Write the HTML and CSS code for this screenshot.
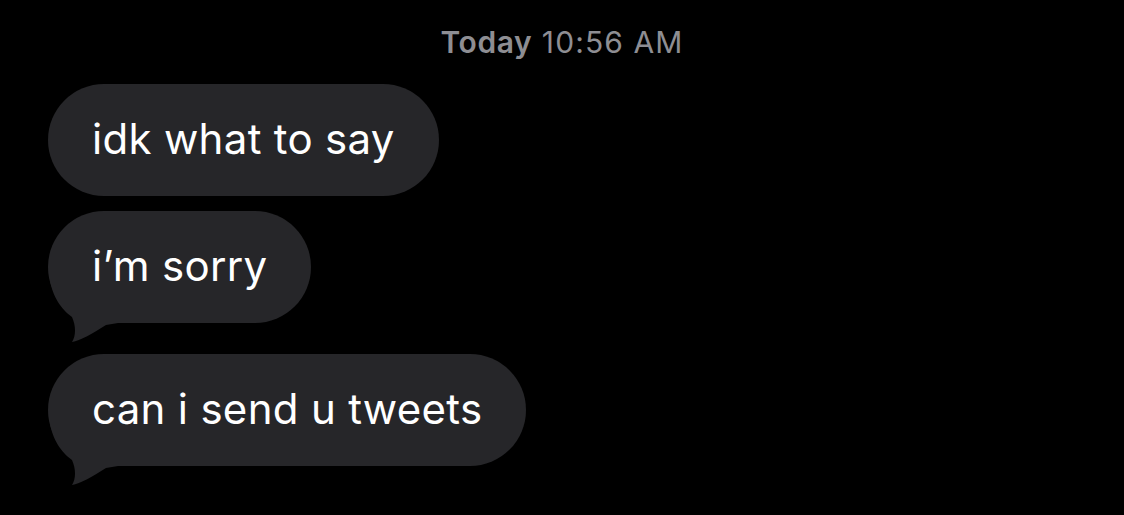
FILE: index.html
```html
<!DOCTYPE html>
<html>
<head>
<meta charset="utf-8">
<link rel="stylesheet" href="styles.css">
</head>
<body>
<main class="thread">
  <div class="stamp"><span class="day">Today</span> 10:56 AM</div>
  <div class="msgs">
    <div class="bubble">idk what to say</div>
    <div class="bubble tailed">i’m sorry<svg class="tail" width="70" height="62" viewBox="0 0 70 62"><path d="M2 0 C6 20 16 30 24 36 C28 45 28 55 24 61 C32 60 45 52 58 44 L70 42 L70 0 Z"/></svg></div>
    <div class="bubble tailed">can i send u tweets<svg class="tail" width="70" height="62" viewBox="0 0 70 62"><path d="M2 0 C6 20 16 30 24 36 C28 45 28 55 24 61 C32 60 45 52 58 44 L70 42 L70 0 Z"/></svg></div>
  </div>
</main>
</body>
</html>
```

FILE: styles.css
```css
html, body {
  margin: 0;
  padding: 0;
  background: #000;
}
body {
  width: 1124px;
  height: 515px;
  overflow: hidden;
  font-family: Inter, "Liberation Sans", sans-serif;
}
.thread {
  display: flex;
  flex-direction: column;
  padding: 24px 0 0 48px;
}
.stamp {
  align-self: center;
  margin-left: -48px;
  color: #8e8e93;
  font-size: 30px;
  line-height: 36px;
  letter-spacing: 1.1px;
}
.day {
  font-weight: 600;
  letter-spacing: 0.6px;
}
.msgs {
  display: flex;
  flex-direction: column;
  align-items: flex-start;
  margin-top: 24px;
}
.bubble {
  position: relative;
  display: inline-flex;
  align-items: center;
  height: 112px;
  box-sizing: border-box;
  padding: 0 44px 4px 44px;
  border-radius: 56px;
  background: #262629;
  color: #fff;
  font-size: 42px;
  letter-spacing: 0.3px;
  margin-bottom: 15px;
}
.bubble.tailed {
  margin-bottom: 31px;
}
.tail {
  position: absolute;
  left: 0;
  bottom: -20px;
  fill: #262629;
}
```
